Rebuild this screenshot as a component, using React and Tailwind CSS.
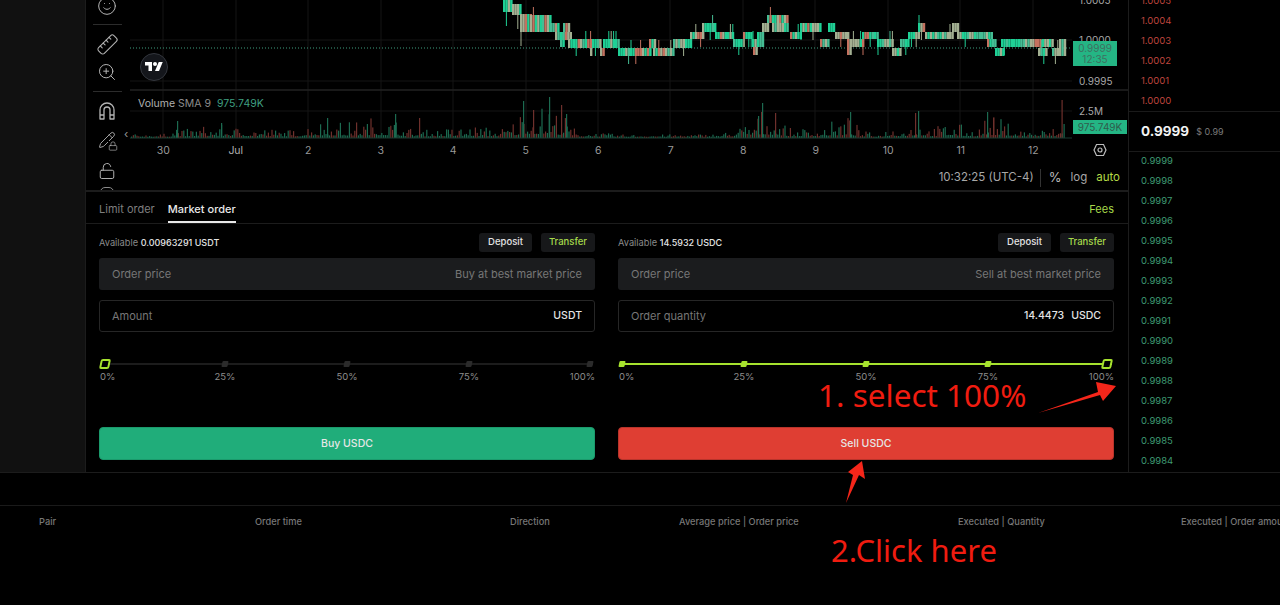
import React from "react";
import { Smile, Ruler, ZoomIn, Pencil, Lock, LockOpen } from "lucide-react";

// small seeded random so the chart stays the same on every render
let seed = 7;
const rnd = () => {
  seed = (seed * 16807) % 2147483647;
  return seed / 2147483647;
};

// candle runs: x start, x end, top y, bottom y
const RUNS = [
  [503, 512, 0, 12], [512, 520, 4, 15], [520, 530, 14, 32], [530, 550, 15, 32], [550, 558, 23, 32],
  [555, 563, 32, 40], [560, 570, 32, 40], [563, 568, 23, 32], [560, 563, 40, 47], [568, 590, 39, 48],
  [590, 592, 48, 56], [592, 600, 39, 48], [600, 603, 48, 56], [603, 618, 39, 48], [618, 650, 48, 56],
  [649, 654, 39, 48], [653, 673, 48, 56], [673, 690, 39, 48], [690, 702, 32, 39], [702, 715, 23, 32],
  [715, 733, 32, 39], [733, 743, 39, 47], [743, 752, 32, 39], [752, 757, 39, 47], [753, 757, 47, 55],
  [757, 762, 32, 47], [762, 768, 23, 32], [767, 788, 15, 23], [772, 788, 23, 32], [790, 800, 32, 39],
  [800, 820, 23, 32], [820, 828, 39, 47], [828, 835, 23, 32], [835, 847, 32, 39], [847, 850, 39, 55],
  [850, 862, 39, 47], [862, 877, 32, 39], [877, 892, 39, 47], [892, 900, 48, 56], [900, 908, 39, 47],
  [908, 918, 32, 39], [918, 925, 23, 32], [925, 952, 32, 39], [952, 957, 23, 32], [957, 992, 32, 39],
  [987, 995, 39, 47], [995, 1003, 48, 56], [1001, 1052, 39, 47], [1038, 1046, 48, 56], [1052, 1059, 48, 56],
  [1059, 1065, 39, 56],
];

const candleColor = () => {
  const r = rnd();
  if (r < 0.42) return "#1fd095";
  if (r < 0.62) return "#45bd94";
  if (r < 0.88) return "#a3b092";
  return "#c4715f";
};

const candles = [];
RUNS.forEach(([x1, x2, top, bottom]) => {
  for (let x = x1; x < x2; x += 2.4) {
    const color = candleColor();
    const wick = rnd();
    const long = x < 532 ? 14 : 8;
    candles.push({
      x,
      color,
      top,
      h: bottom - top,
      wickTop: wick > 0.9 ? top - 8 : top,
      wickBottom: wick < (x < 532 ? 0.3 : 0.1) ? bottom + long : bottom,
    });
  }
});

// volume: highest bar per x, in px above the baseline
const ENVELOPE = [
  [130, 3], [170, 4], [175, 18], [182, 8], [200, 14], [222, 14], [235, 12], [262, 12], [272, 10], [300, 8],
  [311, 20], [330, 20], [350, 18], [372, 24], [395, 22], [405, 12], [420, 8], [440, 10], [460, 12], [472, 14],
  [500, 10], [515, 22], [524, 42], [540, 36], [549, 44], [560, 26], [570, 22], [576, 5], [590, 6], [620, 3],
  [660, 3], [720, 4], [735, 10], [745, 16], [758, 28], [762, 34], [775, 26], [790, 10], [820, 12], [830, 18],
  [850, 26], [860, 8], [880, 3], [890, 16], [900, 10], [918, 22], [930, 10], [950, 20], [975, 8], [985, 26],
  [1000, 22], [1025, 8], [1045, 10], [1058, 12], [1064, 14],
];

// the tallest bars, x and height
const SPIKES = [
  [177, 17, "#1c6a50"], [221, 15, "#1c6a50"], [327, 20, "#1c6a50"], [395, 24, "#1c6a50"], [419, 20, "#6e302c"],
  [523, 37, "#1c6a50"], [533, 28, "#6e302c"], [549, 41, "#1c6a50"], [561, 33, "#6e302c"], [566, 24, "#1c6a50"],
  [762, 35, "#1c6a50"], [758, 22, "#1c6a50"], [775, 25, "#6e302c"], [850, 26, "#1c6a50"], [915, 25, "#6e302c"],
  [918, 27, "#1c6a50"], [987, 26, "#1c6a50"], [993, 20, "#6e302c"], [1061.5, 38, "#6e302c"], [1063.5, 14, "#1c6a50"],
];

const envelopeAt = (x) => {
  for (let i = 1; i < ENVELOPE.length; i++) {
    const [x0, h0] = ENVELOPE[i - 1];
    const [x1, h1] = ENVELOPE[i];
    if (x <= x1) return h0 + ((h1 - h0) * (x - x0)) / (x1 - x0);
  }
  return 4;
};

const bars = [];
for (let x = 131; x < 1062; x += 1.8) {
  const r = rnd();
  bars.push({
    x,
    h: 1 + envelopeAt(x) * (0.08 + r * r * r * 0.8),
    color: rnd() > 0.62 ? "#6e302c" : "#1c6a50",
  });
}
SPIKES.forEach(([x, h, color]) => bars.push({ x, h, color }));

const GRID_X = [163, 236, 308, 381, 453, 526, 598, 670, 743, 815, 888, 960, 1033];
const DAYS = ["30", "Jul", "2", "3", "4", "5", "6", "7", "8", "9", "10", "11", "12"];
const ASKS = ["1.0005", "1.0004", "1.0003", "1.0002", "1.0001", "1.0000"];
const BIDS = [
  "0.9999", "0.9998", "0.9997", "0.9996", "0.9995", "0.9994", "0.9993", "0.9992",
  "0.9991", "0.9990", "0.9989", "0.9988", "0.9987", "0.9986", "0.9985", "0.9984",
];

const ChartSvg = () => (
  <svg className="absolute top-0 left-0 blur-[0.3px]" width="998" height="191" viewBox="130 0 998 191">
    {GRID_X.map((x) => (
      <line key={x} x1={x} x2={x} y1="0" y2="138" stroke="#141414" />
    ))}
    <line x1="130" x2="1072" y1="40" y2="40" stroke="#141414" />
    <line x1="130" x2="1072" y1="81" y2="81" stroke="#141414" />
    <line x1="130" x2="1072" y1="111" y2="111" stroke="#141414" />
    <line x1="130" x2="1128" y1="90" y2="90" stroke="#222222" strokeWidth="1.5" />
    <line x1="130" x2="1072" y1="48" y2="48" stroke="#3f9d7f" strokeDasharray="1 2" />
    {candles.map((c, i) => (
      <g key={i}>
        <line x1={c.x + 1} x2={c.x + 1} y1={c.wickTop} y2={c.wickBottom} stroke={c.color} />
        <rect x={c.x} y={c.top} width="2.4" height={c.h} fill={c.color} />
      </g>
    ))}
    {bars.map((b, i) => (
      <rect key={i} x={b.x} y={138 - b.h} width="1.2" height={b.h} fill={b.color} />
    ))}
    <line x1="130" x2="1072" y1="138" y2="138" stroke="#1b3a30" />
  </svg>
);

const Tv = () => (
  <div className="absolute left-[10px] top-[53px] flex h-[28px] w-[28px] items-center justify-center rounded-full border border-[#33363d] bg-[#14161b]">
    <svg width="18" height="14" viewBox="0 0 36 28" fill="#ffffff">
      <path d="M14 22H7V11H0V4h14v18zM28 22h-8l7.5-18h8L28 22z" />
      <circle cx="20" cy="8" r="4" />
    </svg>
  </div>
);

const Toolbar = () => (
  <div className="flex w-[44px] shrink-0 flex-col items-center overflow-hidden pr-[2px] text-[#b4b4b4]">
    <Smile className="-mt-[4px] h-[20px] w-[20px] shrink-0" strokeWidth={1.2} />
    <div className="mt-[8px] h-px w-[29px] shrink-0 bg-[#2c2c2c]" />
    <Ruler className="mt-[8px] h-[23px] w-[23px] shrink-0 -scale-x-100" strokeWidth={1.1} />
    <ZoomIn className="mt-[6px] h-[20px] w-[20px] shrink-0" strokeWidth={1.2} />
    <div className="mt-[9px] h-px w-[29px] shrink-0 bg-[#2c2c2c]" />
    <svg className="mt-[10px] shrink-0" width="16" height="18" viewBox="0 0 16 18" fill="none" stroke="currentColor" strokeWidth="1.3" strokeLinejoin="round">
      <path d="M1 17V8a7 7 0 0 1 14 0v9h-4V8a3 3 0 0 0-6 0v9z" />
      <path d="M1 13h4M11 13h4" />
    </svg>
    <div className="relative mt-[11px] h-[19px] w-[19px] shrink-0">
      <Pencil className="h-[18px] w-[18px]" strokeWidth={1.2} />
      <Lock className="absolute -right-[1px] -bottom-[1px] h-[10px] w-[10px] bg-black" strokeWidth={1.6} />
    </div>
    <LockOpen className="mt-[12px] h-[18px] w-[18px] shrink-0" strokeWidth={1.3} />
    <div className="mt-[7px] h-[10px] w-[14px] shrink-0 rounded-full border border-[#8a8a8a]" />
  </div>
);

const Chart = () => (
  <div className="flex h-[192px] shrink-0 border-b-2 border-[#1c1c1c]">
    <Toolbar />
    <div className="relative flex-1">
      <ChartSvg />
      <Tv />
      <div className="absolute left-[8px] top-[97px] text-[10.5px] leading-[14px] whitespace-nowrap text-[#8c8c8c]">
        <span className="text-[#b0b0b0]">Volume</span> SMA 9 <span className="ml-[3px] text-[#3f9f80]">975.749K</span>
      </div>
      <div className="absolute left-[-6px] top-[127px] text-[11px] leading-[14px] text-[#9a9a9a]">‹</div>

      {/* price scale */}
      <div className="absolute left-[949px] top-[-7px] text-[10px] leading-[14px] text-[#a8a8a8]">1.0005</div>
      <div className="absolute left-[949px] top-[33px] text-[10px] leading-[14px] text-[#a8a8a8]">1.0000</div>
      <div className="absolute left-[943px] top-[41px] flex h-[25px] w-[44px] flex-col items-center justify-center bg-[#24b584] text-[10px] leading-[11px] text-[#3f6f60]">
        <span>0.9999</span>
        <span>12:35</span>
      </div>
      <div className="absolute left-[949px] top-[74px] text-[10px] leading-[14px] text-[#a8a8a8]">0.9995</div>
      <div className="absolute left-[949px] top-[104px] text-[10px] leading-[14px] text-[#a8a8a8]">2.5M</div>
      <div className="absolute left-[943px] top-[120px] flex h-[14px] w-[54px] items-center justify-center bg-[#24b584] text-[10px] text-[#2f5c4c]">
        975.749K
      </div>

      {/* time scale */}
      <div className="absolute top-[144px] left-[-3px] flex">
        {DAYS.map((d) => (
          <div key={d} className={`w-[72.5px] text-center text-[10.5px] leading-[14px] ${d === "Jul" ? "text-[#b0b0b0]" : "text-[#989898]"}`}>
            {d}
          </div>
        ))}
      </div>
      <svg className="absolute left-[963px] top-[143px]" width="14" height="14" viewBox="0 0 14 14" fill="none" stroke="#bcbcbc" strokeWidth="1.2">
        <polygon points="3.5,1.5 10.5,1.5 13,7 10.5,12.5 3.5,12.5 1,7" />
        <circle cx="7" cy="7" r="2" />
      </svg>

      {/* bottom strip */}
      <div className="absolute right-[8px] top-[168px] flex h-[20px] items-center text-[11.5px] whitespace-nowrap text-[#a8a8a8]">
        <span>10:32:25 (UTC-4)</span>
        <span className="mr-[8px] ml-[6px] h-[18px] w-px bg-[#333333]" />
        <span className="text-[13px] text-[#bcbcbc]">%</span>
        <span className="ml-[9px]">log</span>
        <span className="ml-[9px] text-[#b4dc46]">auto</span>
      </div>
    </div>
  </div>
);

const POINTS = ["0%", "25%", "50%", "75%", "100%"];
const CELLS = [
  "w-[65px] justify-start pl-[1px]",
  "w-[122px] justify-center",
  "w-[122px] justify-center",
  "w-[122px] justify-center",
  "w-[65px] justify-end pr-[2px]",
];

const Slider = ({ active }) => (
  <div>
    <div className="relative flex h-[9px] items-center">
      <div className={`absolute left-[2px] right-[2px] top-[4px] h-[2px] ${active ? "bg-[#a6e22e]" : "bg-[#1c1c1c]"}`} />
      {POINTS.map((p, i) => {
        const current = active ? i === 4 : i === 0;
        return (
          <div key={p} className={`relative flex ${CELLS[i]}`}>
            {current ? (
              <div className="h-[10px] w-[10px] -skew-x-12 rounded-[2px] border-2 border-[#a6e22e] bg-black" />
            ) : (
              <div className={`h-[6px] w-[6px] -skew-x-12 rounded-[1px] ${active ? "bg-[#a6e22e]" : "bg-[#2b2b2b]"}`} />
            )}
          </div>
        );
      })}
    </div>
    <div className="mt-[3px] flex text-[9.5px] leading-[12px] text-[#8c8c8c]">
      {POINTS.map((p, i) => (
        <div key={p} className={`flex ${CELLS[i]} ${i === 4 ? "!pr-0" : ""}`}>{p}</div>
      ))}
    </div>
  </div>
);

const OrderForm = ({ available, priceHint, label, value, unit, active, button, buttonClass }) => (
  <div className="flex w-[496px] flex-col">
    <div className="flex h-[19px] items-center justify-between">
      <div className="text-[9.25px] text-[#8a8a8a]">
        Available <span className="text-[9px] font-medium text-[#e4e4e4]">{available}</span>
      </div>
      <div className="flex gap-[9px] text-[9.5px] font-medium">
        <button className="flex h-[19px] w-[53px] items-center justify-center rounded-[3px] bg-[#17181a] text-[#e4e4e4]">Deposit</button>
        <button className="flex h-[19px] w-[54px] items-center justify-center rounded-[3px] bg-[#17181a] text-[#a6d84a]">Transfer</button>
      </div>
    </div>
    <div className="mt-[6px] flex h-[32px] items-center justify-between rounded-[3px] bg-[#1b1c1e] px-[13px] pt-[1px] text-[11px] text-[#777777]">
      <span>Order price</span>
      <span>{priceHint}</span>
    </div>
    <div className="mt-[10px] flex h-[32px] items-center justify-between rounded-[3px] border border-[#262626] px-[12px] text-[11px] text-[#777777]">
      <span>{label}</span>
      <span className="text-[10.5px] font-medium text-[#e4e4e4]">
        {value && <span className="mr-[7px]">{value}</span>}
        {unit}
      </span>
    </div>
    <div className="mt-[27px]">
      <Slider active={active} />
    </div>
    <button className={`mt-[44px] flex h-[33px] items-center justify-center rounded-[4px] border text-[10.5px] font-medium text-[#e6e6e6] ${buttonClass}`}>
      {button}
    </button>
  </div>
);

const OrderPanel = () => (
  <div className="flex flex-1 flex-col">
    <div className="flex h-[32px] shrink-0 items-stretch justify-between border-b border-[#1c1c1c] pl-[13px] pr-[14px] text-[11px]">
      <div className="flex gap-[13px]">
        <div className="flex items-center pt-[3px] text-[#7e7e7e]">Limit order</div>
        <div className="flex items-center border-b-2 border-[#e8e8e8] pt-[5px] font-medium text-[#e8e8e8]">Market order</div>
      </div>
      <div className="flex items-center pt-[3px] text-[#a6d84a]">Fees</div>
    </div>
    <div className="flex justify-between pl-[13px] pr-[14px] pt-[9px]">
      <OrderForm
        available="0.00963291 USDT"
        priceHint="Buy at best market price"
        label="Amount"
        unit="USDT"
        button="Buy USDC"
        buttonClass="border-[#1b9a6c] bg-[#20ad7a]"
      />
      <OrderForm
        available="14.5932 USDC"
        priceHint="Sell at best market price"
        label="Order quantity"
        value="14.4473"
        unit="USDC"
        active
        button="Sell USDC"
        buttonClass="border-[#b8342b] bg-[#df3e33]"
      />
    </div>
  </div>
);

const OrderBook = () => (
  <div className="flex w-[152px] shrink-0 flex-col overflow-hidden border-l border-[#1c1c1c] text-[9.5px]">
    <div className="-mt-[9px] flex flex-col pl-[12px] text-[#bd453e]">
      {ASKS.map((a) => (
        <div key={a} className="flex h-[20px] items-center">{a}</div>
      ))}
    </div>
    <div className="flex h-[41px] shrink-0 items-center gap-[7px] border-y border-[#1a1a1a] pl-[12px]">
      <span className="text-[13.5px] font-bold text-[#f2f2f2]">0.9999</span>
      <span className="text-[9px] text-[#7a7a7a]">$ 0.99</span>
    </div>
    <div className="-mt-px flex flex-col pl-[12px] text-[#3e9a72]">
      {BIDS.map((b) => (
        <div key={b} className="flex h-[20px] shrink-0 items-center">{b}</div>
      ))}
    </div>
  </div>
);

const Annotations = () => (
  <>
    <div className="absolute left-[818px] top-[373px] text-[31.5px] leading-[44px] whitespace-nowrap text-[#f01c10] [font-family:'Noto_Sans',sans-serif]">
      1. select 100%
    </div>
    <div className="absolute left-[831px] top-[530px] text-[31px] leading-[40px] whitespace-nowrap text-[#f01c10] [font-family:'Noto_Sans',sans-serif]">
      2.Click here
    </div>
    <svg className="absolute left-0 top-0" width="1280" height="605" viewBox="0 0 1280 605" fill="#f5261a">
      <polygon points="1038,413 1098,392 1096,382 1116,386 1103,401 1100,395" />
      <polygon points="846,503 853,475 848,472 862,461 865,479 859,475" />
    </svg>
  </>
);

export default function App() {
  return (
    <div className="relative h-[605px] w-full overflow-hidden bg-black [font-family:Inter,sans-serif]">
      <div className="flex h-[473px] border-b border-[#1c1c1c]">
        <div className="w-[86px] shrink-0 border-r border-[#1c1c1c] bg-[#111111]" />
        <div className="flex min-w-0 flex-1 flex-col">
          <Chart />
          <OrderPanel />
        </div>
        <OrderBook />
      </div>
      <div className="mt-[32px] flex h-[32px] items-center whitespace-nowrap border-t border-[#1a1a1a] pl-[39px] text-[9.25px] font-medium text-[#777777]">
        <div className="w-[216px] shrink-0">Pair</div>
        <div className="w-[255px] shrink-0">Order time</div>
        <div className="w-[169px] shrink-0">Direction</div>
        <div className="w-[279px] shrink-0">Average price | Order price</div>
        <div className="w-[223px] shrink-0">Executed | Quantity</div>
        <div className="shrink-0">Executed | Order amount</div>
      </div>
      <Annotations />
    </div>
  );
}
